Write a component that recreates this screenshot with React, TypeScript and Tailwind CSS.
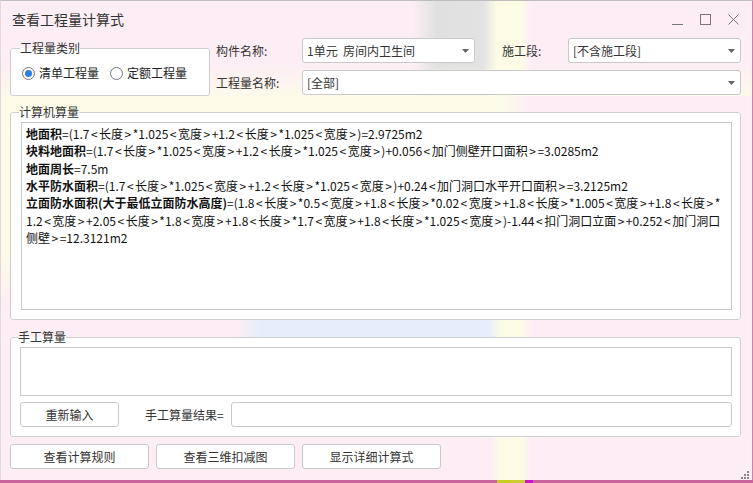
import React from 'react'

const font = "[font-family:'Noto_Sans_CJK_SC',sans-serif]"

function Arrow() {
  return (
    <svg width="7" height="4" viewBox="0 0 7 4" className="shrink-0">
      <path d="M0 0h7L3.5 4z" fill="#666" />
    </svg>
  )
}

function Select({ value, className }: { value: string; className: string }) {
  return (
    <div
      className={`flex h-[25px] items-center justify-between rounded-[3px] border border-[#c9c9c9] bg-white pl-[4px] pr-[5px] text-[12px] text-[#333] ${className}`}
    >
      <span className="whitespace-pre">{value}</span>
      <Arrow />
    </div>
  )
}

function Radio({ checked, label }: { checked?: boolean; label: string }) {
  return (
    <label className="flex items-center gap-[4px] text-[12px] text-[#222]">
      <span className="flex h-[13px] w-[13px] items-center justify-center rounded-full border border-[#777] bg-white">
        {checked && <span className="h-[7px] w-[7px] rounded-full bg-[#2b7fe3]" />}
      </span>
      {label}
    </label>
  )
}

function Button({ label, className }: { label: string; className: string }) {
  return (
    <button
      className={`flex h-[25px] items-center justify-center rounded-[3px] border border-[#c9c9c9] bg-white text-[12px] text-[#333] ${className}`}
    >
      {label}
    </button>
  )
}

// < and > sit wider in the original font, pad them out
function Expr({ text }: { text: string }) {
  const parts = text.split(/([<>])/)
  return (
    <>
      {parts.map((p, i) =>
        p === '<' || p === '>' ? (
          <span key={i} className="mx-[1.5px]">
            {p}
          </span>
        ) : (
          <React.Fragment key={i}>{p}</React.Fragment>
        )
      )}
    </>
  )
}

const formula: { bold?: string; text: string }[] = [
  { bold: '地面积', text: '=(1.7<长度>*1.025<宽度>+1.2<长度>*1.025<宽度>)=2.9725m2' },
  { bold: '块料地面积', text: '=(1.7<长度>*1.025<宽度>+1.2<长度>*1.025<宽度>)+0.056<加门侧壁开口面积>=3.0285m2' },
  { bold: '地面周长', text: '=7.5m' },
  { bold: '水平防水面积', text: '=(1.7<长度>*1.025<宽度>+1.2<长度>*1.025<宽度>)+0.24<加门洞口水平开口面积>=3.2125m2' },
  {
    bold: '立面防水面积(大于最低立面防水高度)',
    text: '=(1.8<长度>*0.5<宽度>+1.8<长度>*0.02<宽度>+1.8<长度>*1.005<宽度>+1.8<长度>*',
  },
  { text: '1.2<宽度>+2.05<长度>*1.8<宽度>+1.8<长度>*1.7<宽度>+1.8<长度>*1.025<宽度>)-1.44<扣门洞口立面>+0.252<加门洞口' },
  { text: '侧壁>=12.3121m2' },
]

export default function App() {
  return (
    <div className={`flex h-[483px] w-[753px] flex-col overflow-hidden ${font}`}>
      <div className="flex h-[480px] flex-col border-t border-r border-l border-t-[#bdbdbd] border-r-[#cf80ad] border-l-[#e6d6de] bg-[#fdeef5]">
        {/* title bar + top controls */}
        <div className="bg-[linear-gradient(180deg,transparent_0,transparent_62px,#fcfbe8_100px),linear-gradient(90deg,#fdeef5_0,#fdeef5_412px,#e0e0e0_436px,#e2e2e2_482px,#fcfce6_496px,#fcfce6_520px,#fdeef5_530px,#fdeef5_100%)]">
          <div className="flex h-[37px] items-center pl-[11px] pr-[13px]">
            <span className="text-[14px] text-[#333]">查看工程量计算式</span>
            <div className="ml-auto flex items-center gap-[17px] text-[#777]">
              <svg width="11" height="11" viewBox="0 0 11 11">
                <path d="M0 10.5h11" stroke="#777" strokeWidth="1" />
              </svg>
              <svg width="11" height="11" viewBox="0 0 11 11">
                <rect x="0.5" y="0.5" width="10" height="10" fill="none" stroke="#777" />
              </svg>
              <svg width="11" height="11" viewBox="0 0 11 11">
                <path d="M0.5 0.5l10 10M10.5 0.5l-10 10" stroke="#777" strokeWidth="1" />
              </svg>
            </div>
          </div>

          <div className="flex pl-[9px] pr-[11px]">
            <fieldset className="mt-[3px] h-[55px] w-[200px] rounded-[3px] border border-[#cfcfcf] bg-white pl-[11px]">
              <legend className="ml-[-2px] px-[0px] text-[12px] leading-[14px] text-[#333]">工程量类别</legend>
              <div className="mt-[9px] flex items-center gap-[11px]">
                <Radio checked label="清单工程量" />
                <Radio label="定额工程量" />
              </div>
            </fieldset>

            <div className="ml-[6px] flex flex-1 flex-col gap-[7px]">
              <div className="flex items-center">
                <span className="w-[86px] text-[12px] text-[#333]">构件名称:</span>
                <Select value="1单元  房间内卫生间" className="w-[173px]" />
                <span className="ml-[27px] w-[66px] text-[12px] text-[#333]">施工段:</span>
                <Select value="[不含施工段]" className="w-[173px]" />
              </div>
              <div className="flex items-center">
                <span className="w-[86px] text-[12px] text-[#333]">工程量名称:</span>
                <Select value="[全部]" className="flex-1" />
              </div>
            </div>
          </div>
        </div>

        {/* computed quantities */}
        <div className="bg-[linear-gradient(180deg,transparent_0,transparent_160px,#fdeef5_210px),linear-gradient(90deg,#fcfbe8_0,#fcfbe8_500px,#fdeef5_530px,#fdeef5_100%)] pl-[9px] pr-[11px] pt-[9px]">
          <fieldset className="flex h-[215px] flex-col rounded-[3px] border border-[#cfcfcf] bg-white pb-[9px] pl-[10px] pr-[8px] pt-[3px]">
            <legend className="ml-[-2px] text-[12px] leading-[14px] text-[#333]">计算机算量</legend>
            <div className="flex-1 border border-[#c9c9c9] bg-white px-[4px] pt-[2px] text-[12px] leading-[17.33px] text-[#111]">
              {formula.map((line, i) => (
                <div key={i} className="whitespace-pre">
                  {line.bold && <b className="font-bold">{line.bold}</b>}
                  <Expr text={line.text} />
                </div>
              ))}
            </div>
          </fieldset>
        </div>

        {/* manual quantities */}
        <div className="bg-[linear-gradient(90deg,#fdeef5_0,#fdeef5_235px,#e6eefb_260px,#e6eefb_488px,#fcfce6_500px,#fcfce6_520px,#fdeef5_532px,#fdeef5_100%)] pl-[9px] pr-[11px] pt-[10px]">
          <fieldset className="flex h-[107px] flex-col rounded-[3px] border border-[#cfcfcf] bg-white pb-[9px] pl-[9px] pr-[8px] pt-[3px]">
            <legend className="ml-[-2px] text-[12px] leading-[14px] text-[#333]">手工算量</legend>
            <div className="h-[49px] border border-[#c9c9c9] bg-white" />
            <div className="mt-[6px] flex items-center">
              <Button label="重新输入" className="w-[99px]" />
              <span className="ml-[26px] w-[86px] text-[12px] text-[#333]">手工算量结果=</span>
              <div className="h-[25px] flex-1 rounded-[3px] border border-[#c9c9c9] bg-white" />
            </div>
          </fieldset>
        </div>

        {/* bottom buttons */}
        <div className="flex flex-1 items-start bg-[linear-gradient(90deg,#fdeef5_0,#fdeef5_490px,#fcfce6_500px,#fcfce6_522px,#fdeef5_530px,#fdeef5_100%)] pl-[9px] pr-[2px] pt-[7px]">
          <Button label="查看计算规则" className="w-[139px]" />
          <Button label="查看三维扣减图" className="ml-[7px] w-[139px]" />
          <Button label="显示详细计算式" className="ml-[7px] w-[139px]" />
          <svg width="9" height="9" viewBox="0 0 9 9" className="ml-auto mt-[27px]">
            <g fill="#888">
              <rect x="6" y="0" width="2" height="2" />
              <rect x="3" y="3" width="2" height="2" />
              <rect x="6" y="3" width="2" height="2" />
              <rect x="0" y="6" width="2" height="2" />
              <rect x="3" y="6" width="2" height="2" />
              <rect x="6" y="6" width="2" height="2" />
            </g>
          </svg>
        </div>
      </div>
      <div className="h-[3px] bg-[linear-gradient(90deg,#c9649c_0,#c9649c_497px,#c8cb22_497px,#c8cb22_511px,#cdcd33_511px,#cdcd33_525px,#cf12cf_525px,#cf12cf_533px,#c9649c_533px,#c9649c_100%)]" />
    </div>
  )
}
